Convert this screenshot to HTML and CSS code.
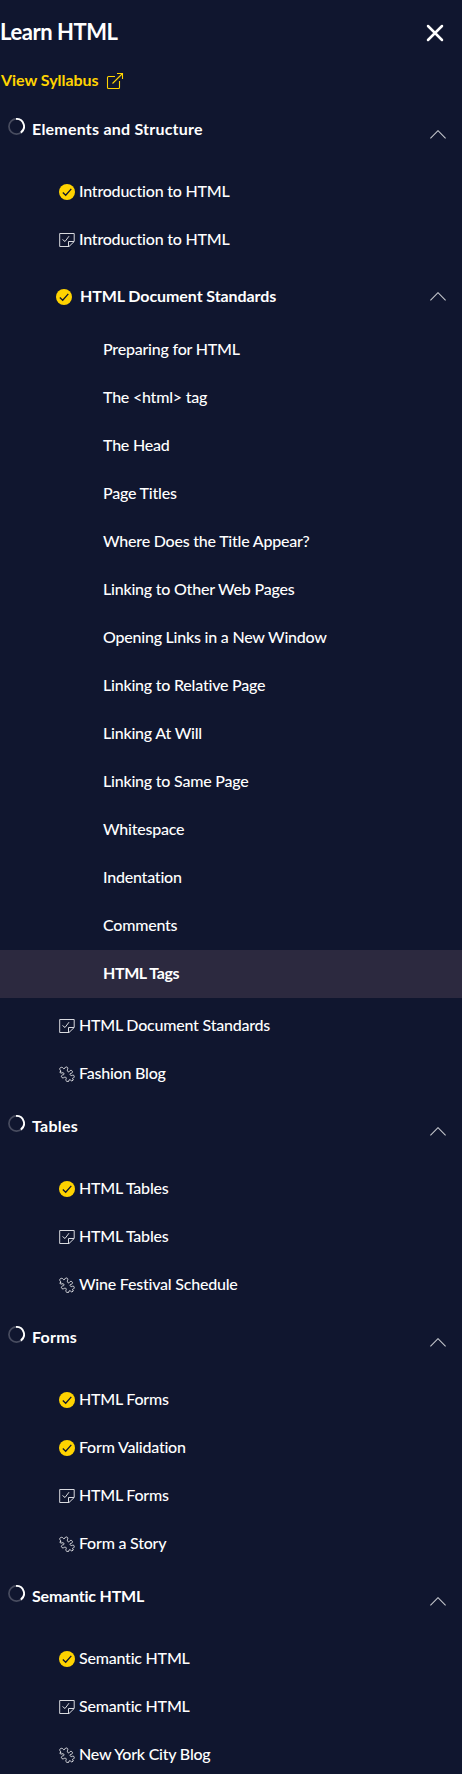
FILE: index.html
```html
<!DOCTYPE html>
<html lang="en">
<head>
<meta charset="utf-8">
<title>Learn HTML</title>
<link rel="stylesheet" href="styles.css">
</head>
<body>
<svg class="defs" width="0" height="0" aria-hidden="true">
  <symbol id="done" viewBox="0 0 16 16"><circle cx="8" cy="8" r="8" fill="#ffd300"/><path d="M3.8 8.6 6.7 11.3 12.3 4.9" fill="none" stroke="#10162f" stroke-width="1.3"/></symbol>
  <symbol id="quiz" viewBox="0 0 16 16"><path d="M.7 1.500H15.200V9.500L10 14.500H.7ZM15 9.500H9.500V14.500M3.500 7.500 6 9.500 10 4.200" fill="none" stroke="currentColor" stroke-width="1" stroke-linejoin="round"/></symbol>
  <symbol id="project" viewBox="0 0 16 16"><path d="M1.200 4.200C-.1 2.400 1.700.6 3.600 1.600L4.700 2.700 6 2.100C6.200.5 9.100.6 8.800 2.600 8 4.300 8.200 5.600 9.600 5.900 10.700 5.800 10.600 4.300 12 4.300 14.200 4.700 13.700 7.300 12 7.300 10.700 7.500 10.800 8.700 11.800 9.500 13.200 10 13.500 8.600 14.700 9.300 16.100 10.700 14.500 12.300 13.500 12.300L14.300 14 12.800 15 11.300 13.900C10.500 13.200 9.700 13.900 10.100 15 8.700 16.200 6.200 15.100 6.900 13.400 7.700 12 7.100 11.100 5.900 11.100 4.900 11.400 4.300 12.400 3 11.600 1.600 10.400 2.800 8.700 4.200 8.900 5.500 8.500 5.100 7 4 6.600 2.800 7.300.9 7.200.8 5.900L2.100 5.200Z" fill="none" stroke="currentColor" stroke-width="1"/></symbol>
  <symbol id="chevron" viewBox="0 0 16 9"><path d="M.4 8.300 8 .7 15.600 8.300" fill="none" stroke="currentColor" stroke-width="1.100"/></symbol>
  <symbol id="spinner" viewBox="0 0 18 18"><circle cx="9" cy="9" r="8" fill="none" stroke="#484c5f" stroke-width="1.800"/><path d="M8.500 1A8 8 0 0 1 13.600 15.500" fill="none" stroke="#fff" stroke-width="2"/></symbol>
</svg>
<nav class="panel">
  <header class="top"><h1 class="title">Learn HTML</h1><svg class="close" viewBox="0 0 18 18"><path d="M2 2 16 16M16 2 2 16" stroke="#fff" stroke-width="2.500" stroke-linecap="round"/></svg></header>
  <a class="syllabus"><span>View Syllabus</span><svg class="external" viewBox="0 0 18 18"><path d="M9 4.500H2.500Q1.500 4.500 1.500 5.500V15.500Q1.500 16.500 2.500 16.500H12.500Q13.500 16.500 13.500 15.500V9M6.500 11.500 16.500 1.500M11 1.500H16.500V7" fill="none" stroke="#ffd300" stroke-width="1.100"/></svg></a>

  <div class="section"><svg class="spinner"><use href="#spinner"/></svg><h2 class="name loose">Elements and Structure</h2><svg class="chevron"><use href="#chevron"/></svg></div>
  <div class="item"><svg class="icon"><use href="#done"/></svg><span>Introduction to HTML</span></div>
  <div class="item"><svg class="icon"><use href="#quiz"/></svg><span>Introduction to HTML</span></div>
  <div class="lesson"><svg class="icon"><use href="#done"/></svg><h3 class="name">HTML Document Standards</h3><svg class="chevron"><use href="#chevron"/></svg></div>
  <div class="exercises">
    <div class="exercise">Preparing for HTML</div>
    <div class="exercise">The &lt;html&gt; tag</div>
    <div class="exercise">The Head</div>
    <div class="exercise">Page Titles</div>
    <div class="exercise">Where Does the Title Appear?</div>
    <div class="exercise">Linking to Other Web Pages</div>
    <div class="exercise">Opening Links in a New Window</div>
    <div class="exercise">Linking to Relative Page</div>
    <div class="exercise">Linking At Will</div>
    <div class="exercise">Linking to Same Page</div>
    <div class="exercise">Whitespace</div>
    <div class="exercise">Indentation</div>
    <div class="exercise">Comments</div>
    <div class="exercise active">HTML Tags</div>
  </div>
  <div class="item"><svg class="icon"><use href="#quiz"/></svg><span>HTML Document Standards</span></div>
  <div class="item"><svg class="icon"><use href="#project"/></svg><span>Fashion Blog</span></div>

  <div class="section"><svg class="spinner"><use href="#spinner"/></svg><h2 class="name loose">Tables</h2><svg class="chevron"><use href="#chevron"/></svg></div>
  <div class="item"><svg class="icon"><use href="#done"/></svg><span>HTML Tables</span></div>
  <div class="item"><svg class="icon"><use href="#quiz"/></svg><span>HTML Tables</span></div>
  <div class="item"><svg class="icon"><use href="#project"/></svg><span>Wine Festival Schedule</span></div>

  <div class="section"><svg class="spinner"><use href="#spinner"/></svg><h2 class="name loose">Forms</h2><svg class="chevron"><use href="#chevron"/></svg></div>
  <div class="item"><svg class="icon"><use href="#done"/></svg><span>HTML Forms</span></div>
  <div class="item"><svg class="icon"><use href="#done"/></svg><span>Form Validation</span></div>
  <div class="item"><svg class="icon"><use href="#quiz"/></svg><span>HTML Forms</span></div>
  <div class="item"><svg class="icon"><use href="#project"/></svg><span>Form a Story</span></div>

  <div class="section"><svg class="spinner"><use href="#spinner"/></svg><h2 class="name tight">Semantic HTML</h2><svg class="chevron"><use href="#chevron"/></svg></div>
  <div class="item"><svg class="icon"><use href="#done"/></svg><span>Semantic HTML</span></div>
  <div class="item"><svg class="icon"><use href="#quiz"/></svg><span>Semantic HTML</span></div>
  <div class="item"><svg class="icon"><use href="#project"/></svg><span>New York City Blog</span></div>
</nav>
</body>
</html>
```
FILE: styles.css
```css
* { box-sizing: border-box; }
html { background: #fff; }
body { margin: 0; color: #fff; font: 500 16px/24px Lato, "Open Sans", sans-serif; letter-spacing: -.22px; }
h1, h2, h3 { margin: 0; }
svg { display: block; flex: none; }
.defs { position: absolute; }
.panel { height: 1774px; overflow: hidden; background: #10162f; }
.top { display: flex; justify-content: space-between; height: 64px; padding: 16px 18px 0 0; }
.title { font-size: 22px; line-height: 32px; font-weight: 700; letter-spacing: -.45px; }
.close { width: 18px; height: 18px; margin-top: 8px; }
.syllabus { display: flex; gap: 7px; height: 37px; padding: 4px 0 0 1px; color: #ffd300; font-weight: 700; letter-spacing: -.04px; }
.syllabus span { line-height: 24px; }
.external { width: 18px; height: 18px; margin-top: 4px; }
.section { display: flex; height: 67px; padding: 16px 16px 0 8px; }
.spinner { width: 17px; height: 17px; margin: 1px 7px 0 0; }
.section .chevron { margin-top: 13px; }
.name { flex: 1; font-size: 16px; line-height: 24px; font-weight: 700; letter-spacing: -.08px; }
.loose { letter-spacing: .22px; }
.tight { letter-spacing: -.2px; }
.chevron { width: 16px; height: 9px; color: #c3c5cb; }
.lesson .chevron { margin-bottom: 2px; }
.item { display: flex; align-items: center; gap: 4px; height: 48px; padding-left: 59px; }
.item span, .lesson .name { padding-bottom: 2px; }
.icon { width: 16px; height: 16px; color: #d8d9de; }
.lesson { display: flex; align-items: center; gap: 8px; height: 62px; padding: 4px 16px 0 56px; }
.exercises { padding-bottom: 4px; }
.exercise { height: 48px; padding: 11px 0 13px 103px; }
.active { background: #2c293f; font-weight: 700; letter-spacing: -.4px; }
```
